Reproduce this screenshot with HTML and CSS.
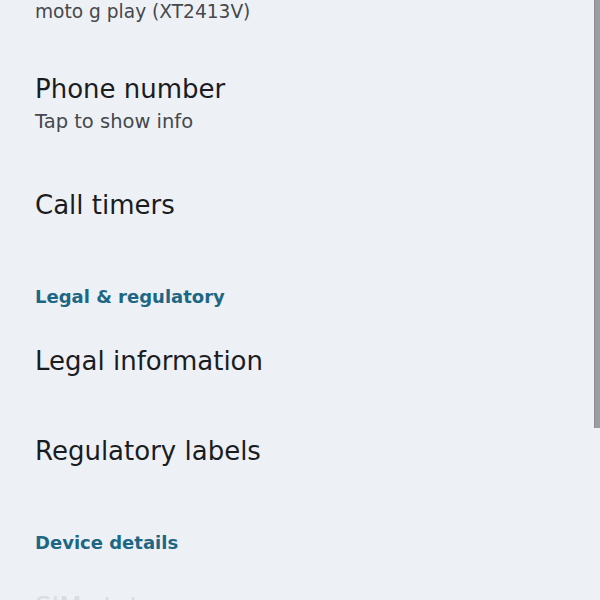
FILE: index.html
```html
<!DOCTYPE html>
<html lang="en">
<head>
  <meta charset="UTF-8" />
  <title>About phone</title>
  <link rel="stylesheet" href="styles.css">
</head>
<body>
  <div class="settings-list">
    <div class="item-tail">
      <span class="summary">moto g play (XT2413V)</span>
    </div>

    <div class="item two-line">
      <div class="title">Phone number</div>
      <div class="summary">Tap to show info</div>
    </div>
    <div class="item">
      <div class="title">Call timers</div>
    </div>

    <div class="category">Legal &amp; regulatory</div>
    <div class="item">
      <div class="title">Legal information</div>
    </div>
    <div class="item">
      <div class="title">Regulatory labels</div>
    </div>

    <div class="category">Device details</div>
    <div class="item faded">
      <div class="title">SIM status</div>
    </div>
  </div>

  <div class="scrollbar"></div>
</body>
</html>
```

FILE: styles.css
```css
body {
  margin: 0;
  background: #edf1f6;
  font-family: 'DejaVu Sans', sans-serif;
  color: #1b1c1f;
  overflow: hidden;
}
.settings-list {
  display: flex;
  flex-direction: column;
}
.item-tail {
  padding: 0 35px 22px;
  line-height: 22px;
}
.item-tail .summary {
  font-size: 18.6px;
}
.item {
  padding: 28px 35px;
}
.item.two-line {
  padding: 26px 35px;
}
.two-line .summary {
  margin-top: 4px;
  font-size: 19.5px;
}
.title {
  font-size: 26px;
  line-height: 34px;
}
.summary {
  font-size: 18px;
  line-height: 24px;
  color: #46484c;
}
.category {
  padding: 35px 35px 7px;
  font-size: 18px;
  line-height: 24px;
  font-weight: bold;
  color: #1d6784;
}
.faded .title {
  color: #d9dce1;
}
.scrollbar {
  position: fixed;
  top: 0;
  right: 0;
  width: 5px;
  height: 428px;
  background: #9b9da1;
  border-left: 1px solid #8a8c90;
}
```
